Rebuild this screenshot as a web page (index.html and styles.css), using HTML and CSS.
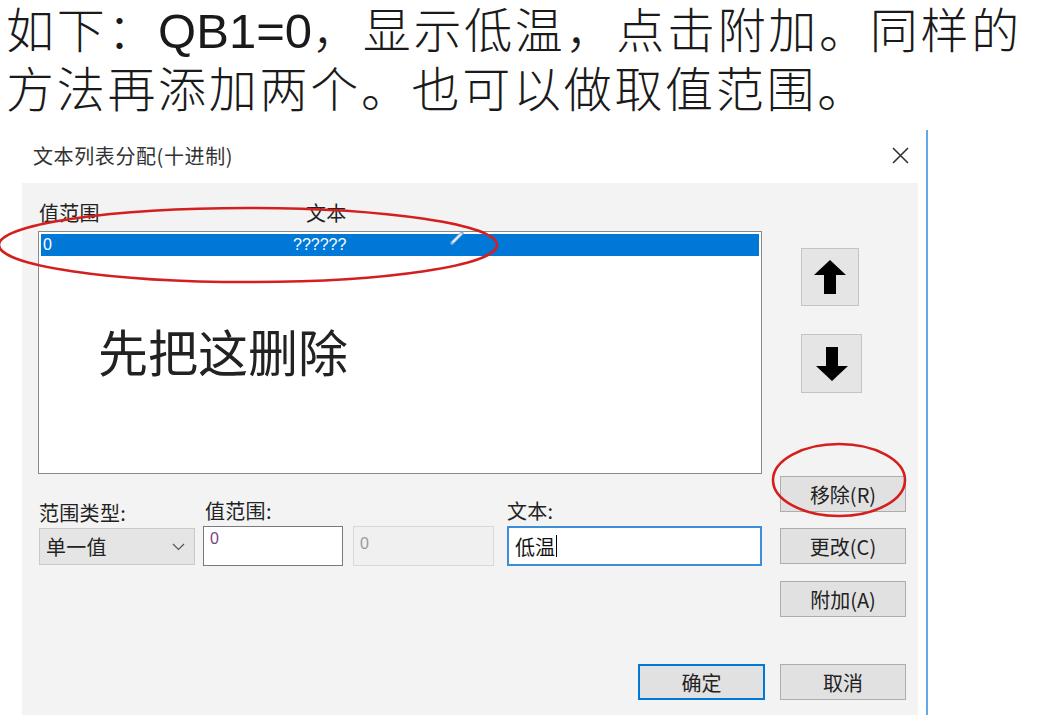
FILE: index.html
```html
<!DOCTYPE html>
<html lang="zh-CN">
<head>
  <meta charset="UTF-8" />
  <meta name="viewport" content="width=device-width, initial-scale=1.0"/>
  <title>文本列表分配</title>
  <link rel="stylesheet" href="styles.css">
</head>
<body>
  <div class="page">
    <div class="caption">
      <div class="line">如下：<span class="latin">QB1=0</span>，显示低温，点击附加。同样的</div>
      <div class="line">方法再添加两个。也可以做取值范围。</div>
    </div>

    <div class="dialog">
      <div class="titlebar">
        <span class="title">文本列表分配(十进制)</span>
        <svg class="close" width="17" height="17" viewBox="0 0 17 17">
          <path d="M1 1 L16 16 M16 1 L1 16" stroke="#333" stroke-width="1.6" fill="none"/>
        </svg>
      </div>

      <div class="dialog-body">
        <div class="main">
          <div class="list-head">
            <span class="col-range">值范围</span>
            <span class="col-text">文本</span>
          </div>
          <div class="list">
            <div class="list-row">
              <span class="col-range">0</span>
              <span class="col-text">??????</span>
            </div>
            <div class="list-note">先把这删除</div>
          </div>

          <div class="fields">
            <div class="field">
              <label>范围类型:</label>
              <div class="combo">
                <span>单一值</span>
                <svg width="13" height="8" viewBox="0 0 13 8">
                  <path d="M1 1 L6.5 6.5 L12 1" stroke="#555" stroke-width="1.2" fill="none"/>
                </svg>
              </div>
            </div>
            <div class="field f-range">
              <label>值范围:</label>
              <div class="pair">
                <div class="edit edit-value">0</div>
                <div class="edit edit-disabled">0</div>
              </div>
            </div>
            <div class="field f-text">
              <label>文本:</label>
              <div class="edit edit-focus">低温<span class="caret"></span></div>
            </div>
          </div>
        </div>

        <div class="side">
          <button class="arrow-btn up">
            <svg width="32" height="34" viewBox="0 0 32 34">
              <path d="M16 0 L32 15 L22 15 L22 34 L10 34 L10 15 L0 15 Z" fill="#000"/>
            </svg>
          </button>
          <button class="arrow-btn down">
            <svg width="32" height="34" viewBox="0 0 32 34">
              <path d="M16 34 L32 19 L22 19 L22 0 L10 0 L10 19 L0 19 Z" fill="#000"/>
            </svg>
          </button>
          <button class="cmd btn-remove">移除(R)</button>
          <button class="cmd btn-change">更改(C)</button>
          <button class="cmd btn-append">附加(A)</button>
        </div>

        <div class="footer">
          <button class="cmd btn-ok">确定</button>
          <button class="cmd">取消</button>
        </div>
      </div>
    </div>

    <!-- red marks drawn over the screenshot -->
    <svg class="marks" width="1037" height="715" viewBox="0 0 1037 715">
      <ellipse cx="248" cy="245" rx="249" ry="37" fill="none" stroke="#d3201e" stroke-width="2.6"/>
      <ellipse cx="839" cy="480" rx="66" ry="36" fill="none" stroke="#d3201e" stroke-width="2.6"/>
      <path d="M452 243 L462 233" stroke="#8fb2d6" stroke-width="3.5" stroke-linecap="round"/>
      <path d="M453 242 L461 234" stroke="#fff" stroke-width="1.5" stroke-linecap="round"/>
    </svg>
  </div>
</body>
</html>
```

FILE: styles.css
```css
* {
  box-sizing: border-box;
}

body {
  margin: 0;
  background-color: #fff;
  overflow: hidden;
  font-family: "Noto Sans CJK SC", sans-serif;
  color: #222;
}

.page {
  position: relative;
  width: 1037px;
  height: 715px;
  overflow: hidden;
}

.caption {
  height: 130px;
  padding: 2px 0 0 6px;
  font-family: "Liberation Sans", "Noto Sans CJK SC", sans-serif;
  font-size: 48px;
  font-weight: 300;
  letter-spacing: 2.7px;
  color: #1a1a1a;
  white-space: nowrap;
}

.caption .line {
  height: 59px;
  line-height: 59px;
}

.caption .latin {
  font-size: 49px;
  font-weight: 400;
  letter-spacing: 0;
}

.dialog {
  width: 928px;
  height: 585px;
  background-color: #fff;
  border-right: 2px solid #63a7e6;
}

.titlebar {
  height: 53px;
  display: flex;
  align-items: center;
  justify-content: space-between;
  padding: 0 17px 2px 33px;
}

.title {
  font-size: 20px;
  letter-spacing: 0.6px;
  color: #333;
}

.dialog-body {
  margin-left: 22px;
  width: 896px;
  height: 532px;
  background-color: #f3f3f3;
  display: grid;
  grid-template-columns: 724px 126px;
  column-gap: 18px;
  align-content: start;
  padding: 20px 0 0 16px;
  font-size: 20px;
  letter-spacing: 0.3px;
}

.list-head {
  height: 28px;
  line-height: 20px;
  display: flex;
  color: #222;
}

.list-head .col-range {
  width: 268px;
  padding-left: 1px;
}

.list {
  height: 243px;
  border: 1px solid #8a8a8a;
  background-color: #fff;
  padding: 2px;
}

.list-row {
  display: flex;
  height: 22px;
  line-height: 22px;
  background-color: #0078d7;
  color: #fff;
  font-family: "Liberation Sans", Arial, sans-serif;
  font-size: 16px;
  letter-spacing: 0;
}

.list-row .col-range {
  width: 252px;
  padding-left: 2px;
}

.list-note {
  margin-top: 64px;
  padding-left: 57px;
  font-size: 50px;
  line-height: 60px;
  letter-spacing: 0;
  color: #222;
}

.fields {
  margin-top: 27px;
  padding-left: 1px;
  display: flex;
  align-items: flex-end;
}

.field label {
  display: block;
  height: 20px;
  line-height: 20px;
  margin-bottom: 5px;
  white-space: nowrap;
}

.f-range {
  margin-left: 8px;
}

.f-range label {
  padding-left: 2px;
}

.f-text {
  margin-left: 13px;
}

.combo {
  width: 156px;
  height: 37px;
  margin-bottom: 1px;
  display: flex;
  align-items: center;
  justify-content: space-between;
  padding: 0 9px 0 6px;
  background-color: #e5e5e5;
  border: 1px solid #c9c9c9;
}

.pair {
  display: flex;
  gap: 10px;
}

.edit {
  height: 40px;
  background-color: #fff;
  border: 1px solid #7a7a7a;
  font-family: "Liberation Sans", Arial, sans-serif;
  font-size: 16px;
  letter-spacing: 0;
}

.edit-value {
  width: 140px;
  padding: 3px 0 0 6px;
  color: #7b3f86;
}

.edit-disabled {
  width: 141px;
  padding: 8px 0 0 6px;
  background-color: #f0f0f0;
  border-color: #d9d9d9;
  color: #9a9a9a;
}

.edit-focus {
  width: 255px;
  display: flex;
  align-items: center;
  padding-left: 6px;
  border: 2px solid #3b8fd9;
  font-family: "Noto Sans CJK SC", sans-serif;
  font-size: 20px;
  color: #111;
}

.caret {
  width: 1px;
  height: 22px;
  margin-left: 1px;
  background-color: #000;
}

.side {
  display: flex;
  flex-direction: column;
  align-items: flex-start;
}

button {
  font-family: "Noto Sans CJK SC", sans-serif;
  font-size: 20px;
  letter-spacing: 0;
  color: #222;
  background-color: #e1e1e1;
  border: 1px solid #adadad;
  padding: 0;
  cursor: pointer;
}

.arrow-btn {
  display: flex;
  align-items: center;
  justify-content: center;
  margin-left: 21px;
  background-color: #e5e5e5;
  border-color: #c4c4c4;
}

.arrow-btn.up {
  width: 58px;
  height: 58px;
  margin-top: 45px;
}

.arrow-btn.down {
  width: 61px;
  height: 59px;
  margin-top: 28px;
}

.cmd {
  width: 126px;
  height: 36px;
}

.btn-remove {
  margin-top: 83px;
}

.btn-change {
  margin-top: 16px;
}

.btn-append {
  margin-top: 17px;
}

.footer {
  grid-column: 1 / -1;
  margin-top: 47px;
  display: flex;
  justify-content: flex-end;
  gap: 15px;
}

.btn-ok {
  width: 127px;
  border: 2px solid #0078d7;
}

.marks {
  position: absolute;
  top: 0;
  left: 0;
  pointer-events: none;
}
```
